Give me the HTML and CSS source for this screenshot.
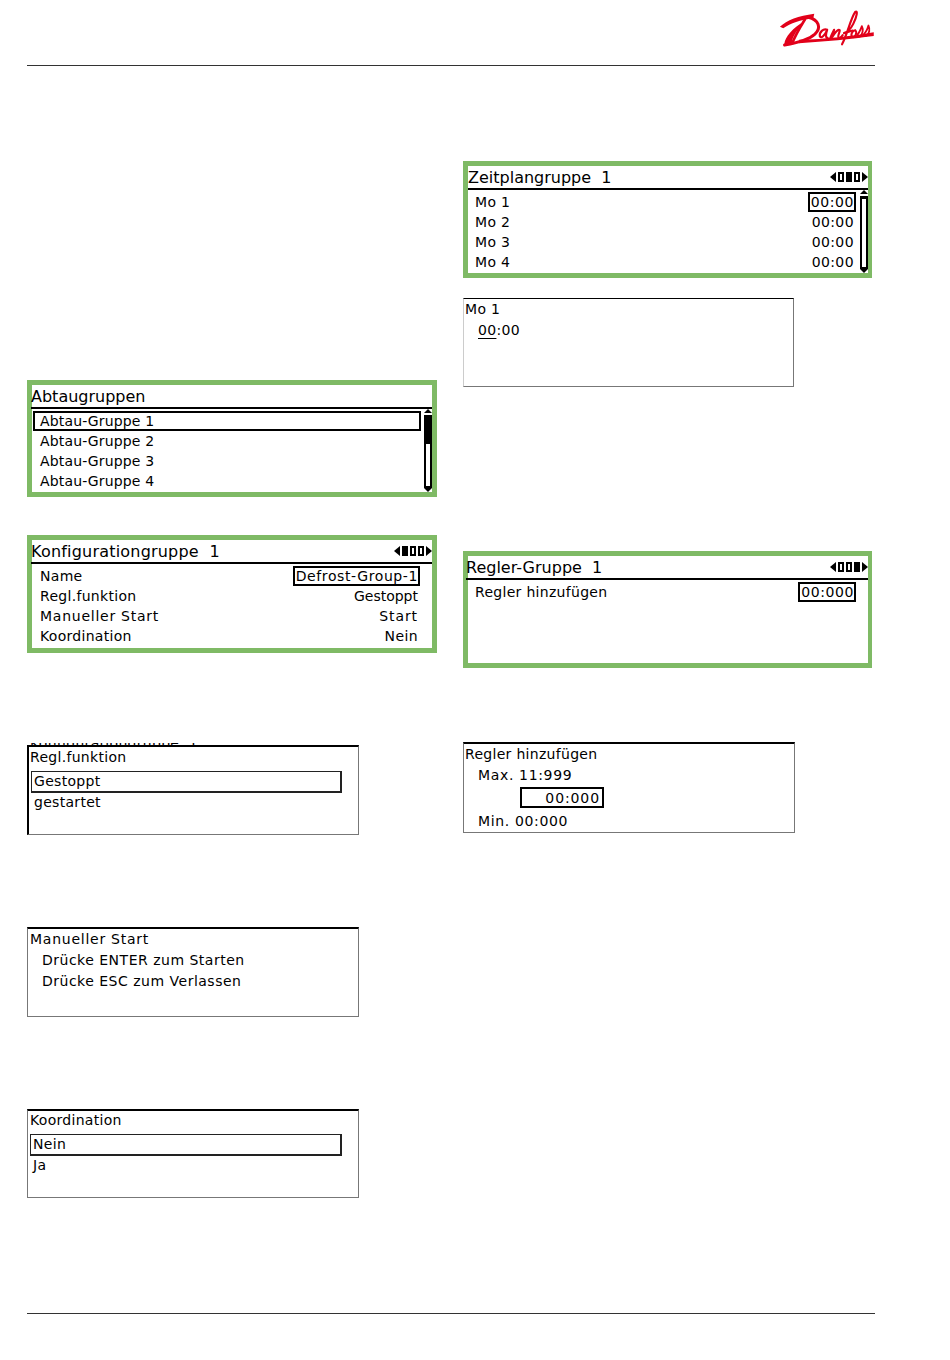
FILE: index.html
```html
<!DOCTYPE html>
<html lang="de">
<head>
<meta charset="utf-8">
<title>Abtaugruppen</title>
<link rel="stylesheet" href="styles.css">
</head>
<body>
<div class="page">
  <header class="head">
    <svg class="logo" viewBox="60 30 290 115" role="img" aria-label="Danfoss">
      <g fill="#e2001a">
        <path d="M64 81C85 60 120 48 168 41L165 55C125 60 97 70 74 85Z"/>
        <path d="M122 120C200 118 290 108 348 97L348 109C280 118 200 126 122 131Z"/>
        <path d="M78 140C74 122 92 94 128 70L134 72C110 96 100 116 100 132Z"/>
      </g>
      <g fill="none" stroke="#e2001a" stroke-linecap="round" stroke-linejoin="round">
        <path stroke-width="9" d="M150 52C182 60 190 84 170 103C150 121 112 130 78 136"/>
        <path stroke-width="8" d="M140 58C124 84 108 110 102 130"/>
        <path stroke-width="6.5" d="M207 90C196 84 182 98 185 110C190 118 200 106 207 90C202 104 202 114 209 115"/>
        <path stroke-width="6.5" d="M216 116C220 106 224 98 228 90C226 100 222 108 222 112C230 100 240 86 245 91C245 100 238 108 241 113C245 116 250 112 254 106"/>
        <path stroke-width="6.5" d="M252 134C268 104 278 56 292 36C300 30 298 48 286 72C280 84 270 96 258 100L284 92"/>
        <path stroke-width="6" d="M292 91C281 93 277 108 284 112C292 114 299 98 292 91"/>
        <path stroke-width="5.5" d="M298 105C304 100 310 84 312 79C317 88 315 104 306 110C302 112 300 108 300 106"/>
        <path stroke-width="5.5" d="M318 103C324 98 330 84 332 77C337 88 335 102 326 108C322 110 320 106 320 104"/>
      </g>
    </svg>
  </header>

  <main class="columns">
    <section class="col col-left">
      <div class="screen screen-abtau">
        <div class="title-row title-abtau"><span class="title">Abtaugruppen</span></div>
        <div class="screen-body">
          <ul class="rows rows-groups">
            <li class="row row-selected"><span>Abtau-Gruppe 1</span></li>
            <li class="row"><span>Abtau-Gruppe 2</span></li>
            <li class="row"><span>Abtau-Gruppe 3</span></li>
            <li class="row"><span>Abtau-Gruppe 4</span></li>
          </ul>
          <div class="scrollbar"><i class="arrow-up"></i><div class="track"><div class="thumb"></div></div><i class="arrow-down"></i></div>
        </div>
      </div>

      <div class="screen screen-konfig">
        <div class="title-row title-abtau">
          <span class="title title-wide">Konfigurationgruppe  1</span>
          <div class="pager"><i class="pg-left"></i><i class="cell on"></i><i class="cell"></i><i class="cell"></i><i class="pg-right"></i></div>
        </div>
        <div class="screen-body">
          <ul class="rows rows-noscroll">
            <li class="row"><span>Name</span><span class="value value-box value-long">Defrost-Group-1</span></li>
            <li class="row"><span>Regl.funktion</span><span class="value value-tight">Gestoppt</span></li>
            <li class="row"><span class="wide">Manueller Start</span><span class="value value-wide">Start</span></li>
            <li class="row"><span>Koordination</span><span class="value">Nein</span></li>
          </ul>
        </div>
      </div>

      <div class="dialog dialog-regl">
        <div class="cut"><span>Konfigurationgruppe  1</span></div>
        <div class="dlg-title">Regl.funktion</div>
        <div class="choice choice-selected">Gestoppt</div>
        <div class="choice choice-plain">gestartet</div>
      </div>

      <div class="dialog dialog-manual">
        <div class="dlg-title wide">Manueller Start</div>
        <div class="dlg-line wide-some">Drücke ENTER zum Starten</div>
        <div class="dlg-line wide-some">Drücke ESC zum Verlassen</div>
      </div>

      <div class="dialog dialog-koord">
        <div class="dlg-title">Koordination</div>
        <div class="choice choice-selected">Nein</div>
        <div class="choice choice-plain">Ja</div>
      </div>
    </section>

    <section class="col col-right">
      <div class="screen screen-zeit">
        <div class="title-row"><span class="title">Zeitplangruppe  1</span>
          <div class="pager"><i class="pg-left"></i><i class="cell"></i><i class="cell on"></i><i class="cell"></i><i class="pg-right"></i></div>
        </div>
        <div class="screen-body">
          <ul class="rows">
            <li class="row"><span>Mo 1</span><span class="value value-box">00:00</span></li>
            <li class="row"><span>Mo 2</span><span class="value">00:00</span></li>
            <li class="row"><span>Mo 3</span><span class="value">00:00</span></li>
            <li class="row"><span>Mo 4</span><span class="value">00:00</span></li>
          </ul>
          <div class="scrollbar"><i class="arrow-up"></i><div class="track"></div><i class="arrow-down"></i></div>
        </div>
      </div>

      <div class="dialog dialog-mo">
        <div class="dlg-title">Mo 1</div>
        <div class="dlg-line"><span class="cursor">00</span>:00</div>
      </div>

      <div class="screen screen-regler">
        <div class="title-row title-regler"><span class="title">Regler-Gruppe  1</span>
          <div class="pager"><i class="pg-left"></i><i class="cell"></i><i class="cell"></i><i class="cell on"></i><i class="pg-right"></i></div>
        </div>
        <div class="screen-body">
          <ul class="rows rows-noscroll">
            <li class="row"><span>Regler hinzufügen</span><span class="value value-box">00:000</span></li>
          </ul>
        </div>
      </div>

      <div class="dialog dialog-add">
        <div class="dlg-title">Regler hinzufügen</div>
        <div class="dlg-line">Max. 11:999</div>
        <div class="spin"><span>00:00<span class="cursor">0</span></span></div>
        <div class="dlg-line dlg-min">Min. 00:000</div>
      </div>
    </section>
  </main>

  <footer class="foot"></footer>
</div>
</body>
</html>
```

FILE: styles.css
```css
* { box-sizing: border-box; }
html, body { margin: 0; padding: 0; background: #fff; }
body {
  font-family: "DejaVu Sans", sans-serif;
  font-size: 14px;
  letter-spacing: 0.3px;
  color: #000;
}
.page { width: 875px; height: 1360px; padding-left: 27px; }
.wide { letter-spacing: 0.75px; }
.wide-some { letter-spacing: 0.5px; }

.head {
  height: 66px;
  border-bottom: 1px solid #333;
  display: flex;
  justify-content: flex-end;
  align-items: flex-start;
}
.logo { width: 97px; height: 38px; margin-top: 10px; }

.columns {
  display: grid;
  grid-template-columns: 410px 409px;
  column-gap: 26px;
  height: 1247px;
}
.col { display: flex; flex-direction: column; align-items: flex-start; }

/* green framed display */
.screen {
  border: 5px solid #7fba65;
  height: 117px;
  width: 100%;
  display: flex;
  flex-direction: column;
  background: #fff;
}
.col-right .screen { border-right-width: 4px; }
.screen-abtau { margin-top: 314px; }
.screen-konfig { margin-top: 38px; height: 118px; }
.screen-zeit { margin-top: 95px; }
.screen-regler { margin-top: 164px; }

.title-row {
  height: 24px;
  flex: none;
  border-bottom: 2px solid #000;
  display: flex;
  justify-content: space-between;
  align-items: center;
}
.title-abtau { margin-left: -1px; }
.title-regler { margin-left: -2px; }
.title { font-size: 16px; letter-spacing: 0; white-space: pre; line-height: 22px; padding-top: 1px; }
.title-wide { letter-spacing: 0.2px; }

.pager { display: flex; align-items: center; gap: 2px; }
.pager i { display: block; height: 10px; }
.cell { width: 6px; border: 2px solid #000; }
.cell.on { background: #000; }
.pg-left, .pg-right { width: 0; border-style: solid; border-color: transparent; border-width: 5px 0; }
.pg-left { border-right: 6px solid #000; }
.pg-right { border-left: 6px solid #000; }

.screen-body { flex: 1; display: flex; min-height: 0; }
.rows { flex: 1; margin: 0; padding: 0 4px 0 0; list-style: none; }
.rows-groups { padding-right: 3px; letter-spacing: 0.15px; }
.rows-noscroll { padding-right: 12px; }
.row {
  height: 20px;
  padding-left: 7px;
  display: flex;
  justify-content: space-between;
  align-items: center;
  white-space: nowrap;
}
.col-left .row { padding-left: 8px; }
.row:first-child { margin-top: 2px; }
.col-left .row-selected { border: 2px solid #000; margin-left: 1px; padding-left: 5px; }
.value { border: 2px solid transparent; padding-left: 1px; height: 20px; line-height: 16px; letter-spacing: 0.4px; }
.value-box { border-color: #000; letter-spacing: 0.6px; }
.value-long { letter-spacing: 0.6px; }
.value-tight { letter-spacing: 0; }
.value-wide { letter-spacing: 0.9px; }

.scrollbar { width: 8px; flex: none; display: flex; flex-direction: column; align-items: center; }
.arrow-up, .arrow-down { width: 0; flex: none; border-style: solid; border-color: transparent; border-width: 0 4px; }
.arrow-up { border-bottom: 4px solid #000; margin-bottom: 2px; }
.arrow-down { border-top: 4px solid #000; }
.track { flex: 1; width: 8px; border: 2px solid #000; border-top-width: 3px; background: #fff; }
.thumb { height: 26px; background: #000; }

/* plain dialogs */
.dialog {
  width: 332px;
  border: 1px solid #777;
  border-top: 2px solid #000;
  position: relative;
  padding-left: 2px;
}
.dlg-title { height: 21px; line-height: 20px; white-space: nowrap; }
.dlg-line { height: 21px; line-height: 21px; padding-left: 12px; white-space: nowrap; }
.cursor { text-decoration: underline; text-underline-offset: 3px; }

.dialog-regl { margin-top: 92px; height: 90px; border-left: 2px solid #000; padding-left: 1px; }
.dialog-manual { margin-top: 92px; height: 90px; }
.dialog-koord { margin-top: 92px; height: 89px; }
.dialog-koord .dlg-title { line-height: 18px; }
.dialog-mo { margin-top: 20px; width: 331px; height: 89px; border-top-width: 1px; border-left-color: #ccc; padding-left: 1px; }
.dialog-mo .dlg-line { padding-left: 13px; }
.dialog-add { margin-top: 74px; height: 91px; padding-left: 1px; }
.dialog-add .dlg-line { padding-left: 13px; letter-spacing: 0.65px; }

.cut { position: absolute; left: 1px; top: -4px; height: 2px; overflow: hidden; }
.cut span { display: block; margin-top: -10px; font-size: 14px; line-height: 20px; white-space: pre; }

.choice { height: 20px; line-height: 18px; padding-left: 2px; margin-right: 16px; white-space: nowrap; }
.choice-plain { padding-left: 4px; }
.dialog-koord .choice-plain { padding-left: 3px; }
.choice-selected { height: 22px; border: 2px solid #222; border-width: 1px 2px 2px 1px; margin-top: 3px; padding-left: 2px; }
.dialog-regl .choice-selected { margin-left: 1px; }
.dialog-koord .choice-selected { margin-top: 2px; }

.spin {
  width: 84px;
  height: 21px;
  margin: 1px 0 0 55px;
  border: 2px solid #000;
  display: flex;
  justify-content: flex-end;
  align-items: center;
  padding-right: 2px;
  letter-spacing: 0.9px;
}
.dlg-min { margin-top: 3px; }

.foot { border-top: 1px solid #333; height: 1px; }
```
